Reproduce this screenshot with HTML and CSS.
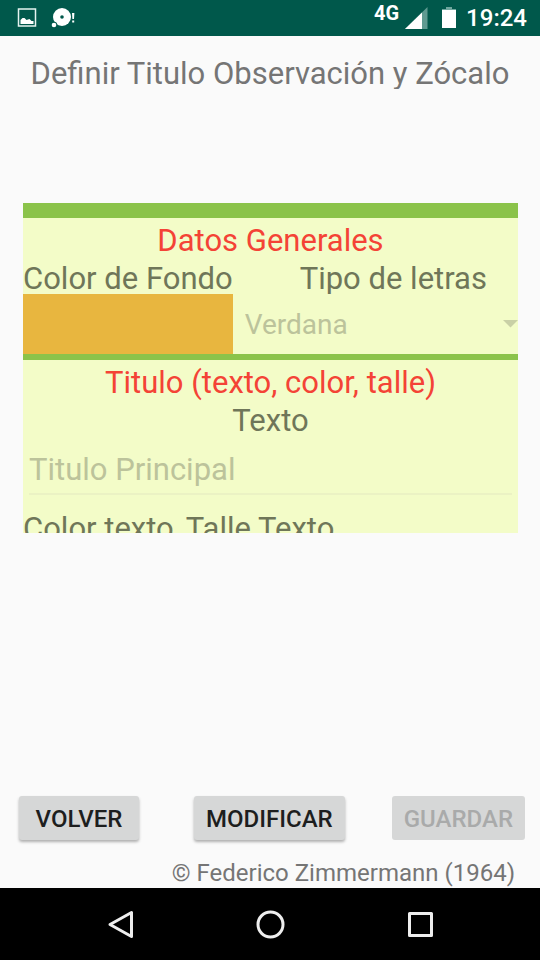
FILE: index.html
```html
<!DOCTYPE html>
<html lang="es">
<head>
<meta charset="utf-8">
<meta name="viewport" content="width=device-width, initial-scale=1">
<title>Definir Titulo Observación y Zócalo</title>
<link rel="stylesheet" href="styles.css">
</head>
<body>
<header class="status">
  <div class="status-group">
    <svg class="icon-picture" width="20" height="20" viewBox="0 0 20 20" aria-hidden="true">
      <rect x="1.500" y="1" width="17" height="17" fill="none" stroke="#e4f3f0" stroke-width="1.5"/>
      <path d="M3.500 16v-4l2-2h2l2 2 3-1 2 2h2v3z" fill="#fff"/>
    </svg>
    <svg width="26" height="22" viewBox="0 0 26 22" aria-hidden="true">
      <circle cx="11" cy="10" r="9" fill="#fff"/>
      <circle cx="11" cy="10" r="1.800" fill="#00584b"/>
      <circle cx="3" cy="18" r="3.200" fill="#00584b"/>
      <circle cx="3" cy="18" r="2.300" fill="#fff"/>
      <path d="M21 6h2.400l-.4 6h-1.600zM21.200 13.500h2v2h-2z" fill="#fff"/>
    </svg>
  </div>
  <div class="status-group">
    <span class="network">4G</span>
    <svg class="icon-signal" width="23" height="22" viewBox="0 0 23 22" aria-hidden="true">
      <path d="M22.500 0v22H0z" fill="#5f9a91"/>
      <path d="M17 5.400V22H0z" fill="#fff"/>
    </svg>
    <svg class="icon-battery" width="14" height="22" viewBox="0 0 14 22" aria-hidden="true">
      <path d="M4 0h6v2h4v3H0V2h4z" fill="#6fa59d"/>
      <path d="M0 3h14v18H0z" fill="#fff"/>
    </svg>
    <span class="clock">19:24</span>
  </div>
</header>
<main class="screen">
  <h1 class="line clip page-title">Definir Titulo Observación y Zócalo</h1>
  <form class="panel" id="form">
    <div class="bar bar-thick"></div>
    <h2 class="line heading">Datos Generales</h2>
    <div class="general">
      <label class="line" for="fondo">Color de Fondo</label>
      <label class="line clip font-label" for="letras">Tipo de letras</label>
      <button class="swatch" id="fondo" type="button" disabled></button>
      <div class="spinner">
        <select class="select" id="letras" disabled><option>Verdana</option></select>
        <svg class="caret" width="15" height="8" viewBox="0 0 15 8" aria-hidden="true"><path d="M0 0h15L7.500 7.500z" fill="#c9d0a6"/></svg>
      </div>
    </div>
    <div class="bar"></div>
    <h2 class="line heading">Titulo (texto, color, talle)</h2>
    <label class="line centered" for="titulo">Texto</label>
    <input class="field" id="titulo" type="text" placeholder="Titulo Principal" disabled>
    <div class="line columns"><span>Color texto</span><span>Talle Texto</span></div>
  </form>
  <div class="actions">
    <button class="button" type="button">VOLVER</button>
    <button class="button button-edit" type="button">MODIFICAR</button>
    <button class="button" type="submit" form="form" disabled>GUARDAR</button>
  </div>
  <footer class="credit">© Federico Zimmermann (1964)</footer>
</main>
<nav class="nav">
  <button class="nav-button" type="button" aria-label="Atrás">
    <svg width="30" height="30" viewBox="0 0 30 30"><path d="M26.500 3.500v24L5 15.500z" fill="none" stroke="#eee" stroke-width="3" stroke-linejoin="round"/></svg>
  </button>
  <button class="nav-button" type="button" aria-label="Inicio">
    <svg width="30" height="30" viewBox="0 0 30 30"><circle cx="15.500" cy="15.500" r="12.500" fill="none" stroke="#eee" stroke-width="3"/></svg>
  </button>
  <button class="nav-button" type="button" aria-label="Recientes">
    <svg width="30" height="30" viewBox="0 0 30 30"><rect x="4.500" y="4.500" width="22" height="22" fill="none" stroke="#eee" stroke-width="3" stroke-linejoin="round"/></svg>
  </button>
</nav>
</body>
</html>
```
FILE: styles.css
```css
* {
  box-sizing: border-box;
}

body {
  margin: 0;
  min-height: 100vh;
  display: flex;
  flex-direction: column;
  background: #fafafa;
  color: #757575;
  font-family: Roboto, sans-serif;
}

button,
input,
select {
  margin: 0;
  border: 0;
  border-radius: 0;
  font-family: inherit;
}

svg {
  display: block;
}

.status {
  display: flex;
  justify-content: space-between;
  height: 36px;
  padding: 0 13px 0 17px;
  background: #00584b;
  color: #fff;
}

.status-group {
  display: flex;
  align-items: center;
  gap: 14px;
}

.network {
  align-self: flex-start;
  margin-right: -8px;
  padding-top: 3px;
  font-size: 20px;
  font-weight: 700;
  line-height: 20px;
}

.icon-battery {
  margin-right: -4px;
}

.clock {
  font-size: 24px;
  font-weight: 500;
  line-height: 36px;
}

.screen {
  flex: 1;
  display: flex;
  flex-direction: column;
}

.line {
  display: block;
  height: 38px;
  margin: 0;
  padding-top: 7px;
  font-size: 31px;
  font-weight: 400;
  line-height: 32px;
  white-space: nowrap;
}

.clip {
  overflow: hidden;
}

.page-title {
  margin-top: 15px;
  text-align: center;
}

.panel {
  height: 330px;
  margin: 114px 22px 0 23px;
  overflow: hidden;
  background: #f3fcc8;
  color: #6f7659;
}

.bar {
  height: 6px;
  background: #8bc34a;
}

.bar-thick {
  height: 15px;
}

.heading {
  color: #f44336;
  text-align: center;
}

.general {
  display: grid;
  grid-template-columns: auto 1fr;
}

.font-label {
  padding-left: 36px;
  text-align: center;
}

.swatch {
  height: 60px;
  padding: 0;
  background: #e8b63f;
}

.spinner {
  display: flex;
  align-items: center;
}

.select {
  flex: 1;
  padding: 0 12px;
  appearance: none;
  background: transparent;
  color: #bcc39b;
  font-size: 28px;
  opacity: 1;
}

.centered {
  text-align: center;
}

.field {
  display: block;
  width: calc(100% - 12px);
  height: 59px;
  margin: 0 6px 11px;
  padding: 9px 0 0;
  border-bottom: 2px solid #ebf2c4;
  background: transparent;
  font-size: 31px;
}

.field::placeholder {
  color: #bcc39b;
  opacity: 1;
}

.columns {
  display: flex;
  gap: 12px;
}

.actions {
  display: flex;
  align-items: center;
  justify-content: space-between;
  margin-top: auto;
  padding: 0 15px 0 19px;
}

.button {
  min-width: 120px;
  height: 44px;
  padding: 2px 12px 0;
  border-radius: 3px;
  background: #d6d7d7;
  box-shadow: 0 2px 3px rgba(0, 0, 0, 0.3);
  color: #1d1e1e;
  font-size: 24px;
  font-weight: 500;
}

.button-edit {
  margin-left: 8px;
}

.button:disabled {
  box-shadow: none;
  color: #a9aaaa;
}

.credit {
  margin-top: 18px;
  padding-right: 25px;
  font-size: 24px;
  line-height: 30px;
  text-align: right;
}

.nav {
  display: flex;
  justify-content: center;
  height: 72px;
  background: #000;
}

.nav-button {
  display: flex;
  align-items: center;
  justify-content: center;
  width: 150px;
  padding: 0;
  background: transparent;
}
```
